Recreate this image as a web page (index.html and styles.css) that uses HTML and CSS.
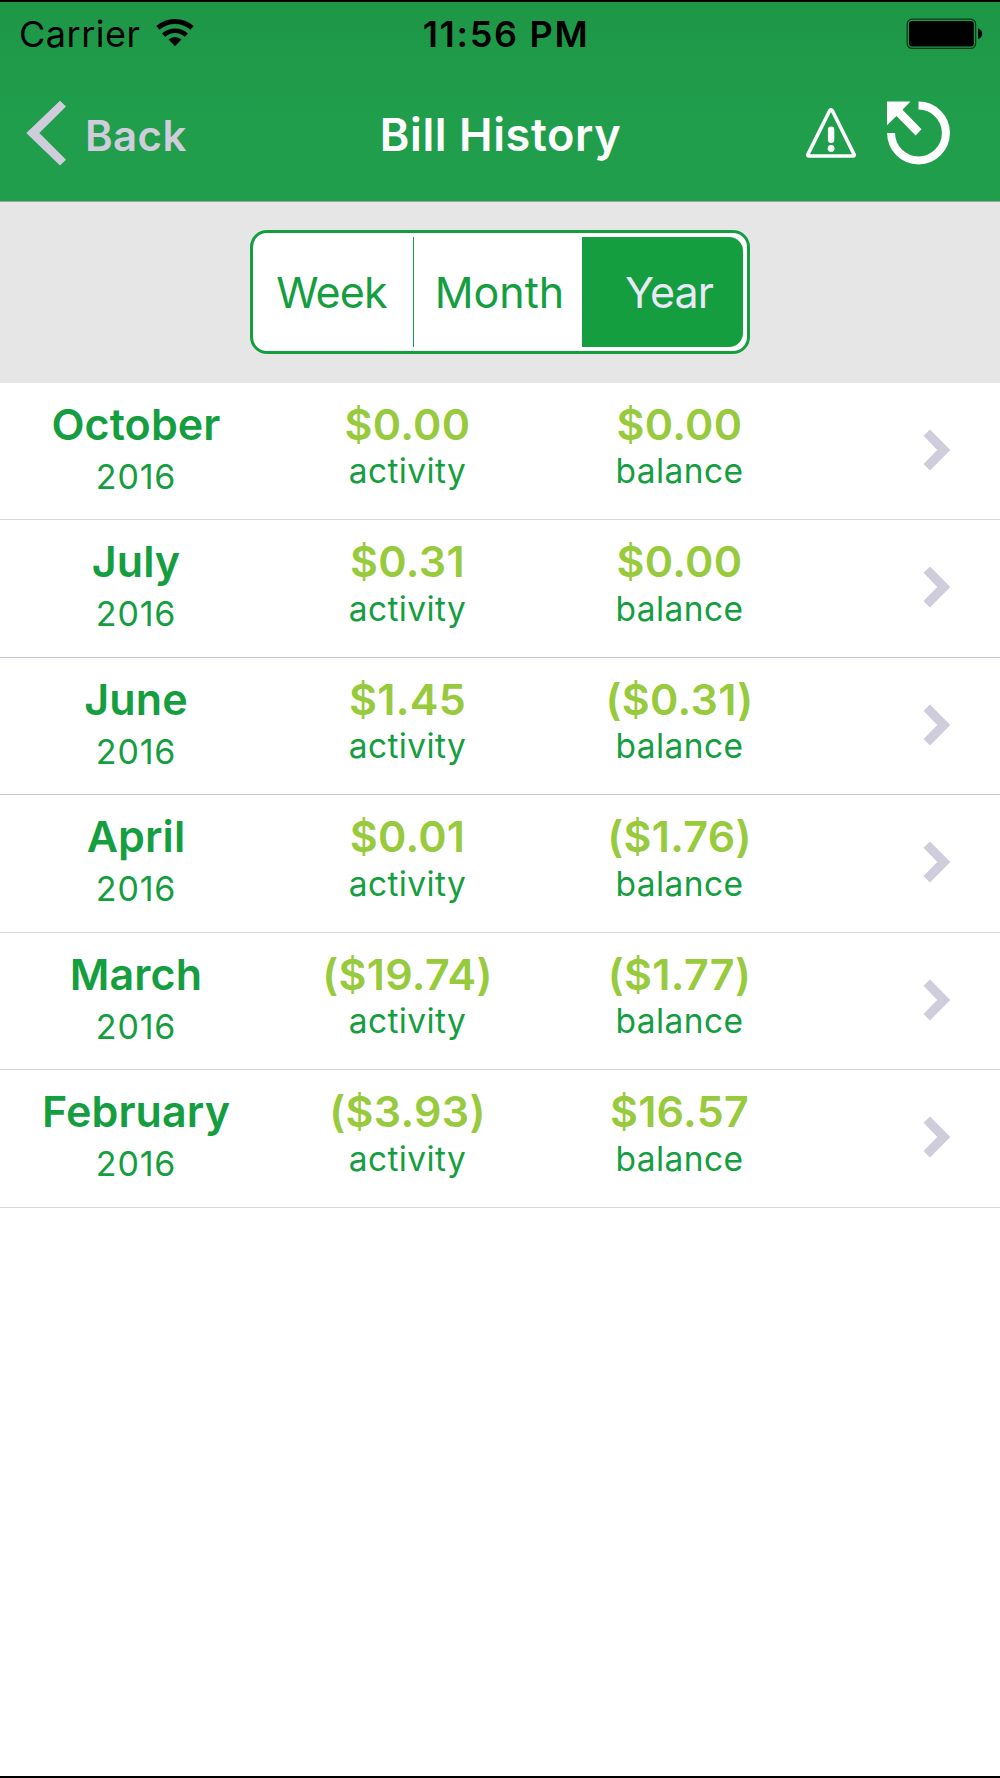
FILE: index.html
```html
<!DOCTYPE html>
<html lang="en">
  <head>
    <meta charset="UTF-8" />
    <meta name="viewport" content="width=device-width, initial-scale=1.0" />
    <title>Bill History</title>
    <link rel="stylesheet" href="styles.css">
  </head>
  <body>
    <header class="header">
      <div class="status-bar">
        <div class="carrier">
          <span>Carrier</span>
          <svg class="wifi" width="38" height="29" viewBox="0 0 38 29">
            <path d="M1.9 9.9A25.8 25.8 0 0 1 36.1 9.9" fill="none" stroke="#000" stroke-width="5" />
            <path d="M7.6 17.1A17 17 0 0 1 30.4 17.1" fill="none" stroke="#000" stroke-width="4.6" />
            <path d="M19 28.3L12.6 21.6A9.4 9.4 0 0 1 25.4 21.6Z" />
          </svg>
        </div>
        <div class="time">11:56 PM</div>
        <svg class="battery" width="78" height="32" viewBox="0 0 78 32">
          <rect x="1.2" y="1.2" width="68.4" height="29.2" rx="5" fill="none" stroke="#0a3a1b" stroke-width="1.3" />
          <rect x="3" y="3" width="64.8" height="25.6" rx="3" />
          <path d="M72 10.5C77.6 11.5 77.6 20 72 21Z" />
        </svg>
      </div>
      <nav class="nav-bar">
        <a class="back">
          <svg width="40" height="66" viewBox="0 0 40 66">
            <path d="M34 0.8L40 6.5L13.3 33L40 59.7L34 65.6L0.3 33Z" fill="#cfcddc" />
          </svg>
          <span>Back</span>
        </a>
        <h1 class="title">Bill History</h1>
        <div class="actions">
          <svg width="50" height="50" viewBox="0 0 50 50">
            <path d="M23.6 2.8Q25 0.8 26.4 2.8L48 46.2Q48.6 48 47 48H3Q1.4 48 2 46.2Z" fill="none" stroke="#fff" stroke-width="3.6" />
            <rect x="21.9" y="18.4" width="6.4" height="16.6" rx="3.2" fill="#fff" />
            <circle cx="25.1" cy="40.4" r="3.4" fill="#fff" />
          </svg>
          <svg width="63" height="64" viewBox="0 0 63 64">
            <path d="M31.5 4.6A27.4 27.4 0 1 1 4.1 32" fill="none" stroke="#fff" stroke-width="8" />
            <path d="M0 0.5H23.5L15.5 8.7L34.5 28.2L28.7 34.5L9.5 15L0 24.2Z" fill="#fff" />
          </svg>
        </div>
      </nav>
    </header>

    <section class="filter">
      <div class="segments">
        <button class="segment week">Week</button>
        <button class="segment month">Month</button>
        <button class="segment year">Year</button>
      </div>
    </section>

    <ul class="bills" id="bills"></ul>

    <script>
      const bills = [
        { month: 'October', year: 2016, activity: '$0.00', balance: '$0.00' },
        { month: 'July', year: 2016, activity: '$0.31', balance: '$0.00' },
        { month: 'June', year: 2016, activity: '$1.45', balance: '($0.31)' },
        { month: 'April', year: 2016, activity: '$0.01', balance: '($1.76)' },
        { month: 'March', year: 2016, activity: '($19.74)', balance: '($1.77)' },
        { month: 'February', year: 2016, activity: '($3.93)', balance: '$16.57' },
      ];

      document.getElementById('bills').innerHTML = bills
        .map(
          (bill) => `
        <li class="bill">
          <div class="cell">
            <div class="name">${bill.month}</div>
            <div class="sub-year">${bill.year}</div>
          </div>
          <div class="cell">
            <div class="amount">${bill.activity}</div>
            <div class="caption">activity</div>
          </div>
          <div class="cell">
            <div class="amount">${bill.balance}</div>
            <div class="caption">balance</div>
          </div>
          <svg class="chevron" width="28" height="42" viewBox="0 0 28 42">
            <path d="M7 0.4L27.3 21L7 41.4L0.5 35L14.3 21L0.5 6.8Z" fill="#cfcddc" />
          </svg>
        </li>`
        )
        .join('');
    </script>
  </body>
</html>
```
FILE: styles.css
```css
* {
  box-sizing: border-box;
}

body {
  font-family: Inter, 'Liberation Sans', sans-serif;
  margin: 0;
  min-height: 1778px;
  background-color: #fff;
  color: #159e3f;
  border-top: 2px solid #000;
  border-bottom: 2px solid #000;
}

.header {
  height: 200px;
  background: linear-gradient(#1e9747, #209e4c 60%);
  border-bottom: 1px solid #9aa39d;
}

/* Status bar */
.status-bar {
  display: grid;
  grid-template-columns: 1fr auto 1fr;
  height: 64px;
  padding: 0 16px 0 19px;
  color: #000;
}

.carrier {
  display: flex;
  align-items: flex-start;
  font-size: 36px;
  line-height: 64px;
  letter-spacing: 0.5px;
}

.wifi {
  margin: 16px 0 0 15px;
}

.time {
  font-size: 36px;
  font-weight: 600;
  line-height: 64px;
  padding-left: 9px;
  letter-spacing: 1.7px;
}

.battery {
  justify-self: end;
  margin-top: 16px;
}

/* Navigation bar */
.nav-bar {
  display: grid;
  grid-template-columns: 1fr auto 1fr;
  padding: 34px 50px 0 26px;
}

.back {
  display: flex;
  align-items: flex-start;
  color: #cfcddc;
  font-size: 42px;
  font-weight: 600;
  line-height: 72px;
  letter-spacing: 0.4px;
}

.back span {
  margin-left: 19px;
}

.title {
  margin: 0 0 0 25px;
  color: #fff;
  font-size: 45px;
  font-weight: 600;
  line-height: 70px;
  letter-spacing: 0.6px;
}

.actions {
  display: flex;
  justify-content: flex-end;
  align-items: flex-start;
  gap: 31px;
}

.actions svg:first-child {
  margin-top: 8px;
}

.actions svg:last-child {
  margin-top: 1px;
}

/* Week / Month / Year switch */
.filter {
  display: flex;
  justify-content: center;
  align-items: center;
  height: 180.5px;
  background-color: #e6e6e6;
}

.segments {
  display: flex;
  width: 500px;
  height: 124px;
  padding: 4px;
  background-color: #fff;
  border: 3px solid #159e3f;
  border-radius: 17px;
}

.segment {
  padding: 0;
  border: none;
  background: none;
  color: #159e3f;
  font-family: inherit;
  font-size: 43px;
  line-height: 110px;
}

.week {
  width: 157px;
  padding-right: 7px;
  border-right: 1px solid #159e3f;
  letter-spacing: -0.8px;
}

.month {
  flex: 1;
  padding-left: 3px;
}

.year {
  width: 161px;
  height: 110px;
  padding-left: 13px;
  background-color: #159e3f;
  border-radius: 0 14px 14px 0;
  color: #e9e8f6;
  letter-spacing: -0.9px;
}

/* Bill list */
.bills {
  list-style: none;
  margin: 0;
  padding: 0;
}

.bill {
  display: grid;
  grid-template-columns: 272px 271px 273px 1fr;
  height: 137.5px;
  padding-top: 16px;
  border-bottom: 1px solid #d8d7e0;
}

.bill:nth-child(2),
.bill:nth-child(3) {
  border-bottom-color: #c9c7d6;
}

.cell {
  text-align: center;
}

.name,
.amount {
  font-size: 43px;
  font-weight: 600;
  line-height: 50px;
}

.name {
  letter-spacing: 0.1px;
}

.amount {
  color: #97ca3d;
  letter-spacing: 0.3px;
}

.sub-year {
  margin-top: 8px;
  font-size: 34px;
  line-height: 40px;
  letter-spacing: 0.8px;
}

.caption {
  margin-top: 2.5px;
  font-size: 33.5px;
  line-height: 40px;
  letter-spacing: 0.4px;
}

.chevron {
  justify-self: end;
  margin: 30px 49px 0 0;
}
```
